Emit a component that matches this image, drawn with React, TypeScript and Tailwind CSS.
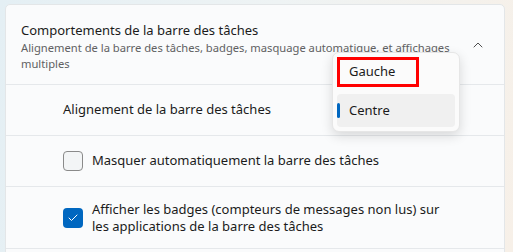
import { Check, ChevronUp } from 'lucide-react';

function Row({ children, className = '' }: { children: React.ReactNode; className?: string }) {
  return <div className={`flex items-center border-t border-[#e5e8eb] pl-[57px] pr-4 ${className}`}>{children}</div>;
}

function CheckBox({ checked }: { checked: boolean }) {
  return checked ? (
    <span className="flex h-5 w-5 shrink-0 items-center justify-center rounded-[4px] bg-[#0067c0]">
      <Check size={12} strokeWidth={2} className="text-white" />
    </span>
  ) : (
    <span className="h-5 w-5 shrink-0 rounded-[4px] border border-[#8a8a8a] bg-[#f3f5f6]" />
  );
}

export default function App() {
  return (
    <div
      className="relative h-[252px] w-[513px] overflow-hidden bg-[linear-gradient(100deg,#e4eff4_0%,#eef3f4_50%,#f7f0e8_100%)] pl-[5px] pt-1 text-[#1b1b1b]"
      style={{ fontFamily: '"Noto Sans", "Segoe UI", sans-serif' }}
    >
      <div className="w-[500px] overflow-hidden rounded-t-[5px] border border-[#e3e6e8] bg-[#fafbfc]">
        <div className="flex h-[79px] items-center pl-[15px] pr-[18px]">
          <div className="flex-1 pt-[2px]">
            <div className="text-[13px] leading-[20px]">Comportements de la barre des tâches</div>
            <div className="text-[11.2px] leading-[16px] text-[#606162]">
              Alignement de la barre des tâches, badges, masquage automatique, et affichages multiples
            </div>
          </div>
          <ChevronUp size={16} strokeWidth={1.3} className="ml-4 text-[#333]" />
        </div>
        <Row className="h-[51px]">
          <span className="text-[13px]">Alignement de la barre des tâches</span>
        </Row>
        <Row className="h-[51px] gap-[9px]">
          <CheckBox checked={false} />
          <span className="text-[13px]">Masquer automatiquement la barre des tâches</span>
        </Row>
        <Row className="h-[62px] gap-[9px]">
          <CheckBox checked />
          <span className="w-[360px] text-[13px] leading-[17px]">
            Afficher les badges (compteurs de messages non lus) sur les applications de la barre des tâches
          </span>
        </Row>
        <div className="h-2 border-t border-[#e5e8eb]" />
      </div>

      <div className="absolute left-[332px] top-[52px] flex w-[128px] flex-col gap-[7px] rounded-[7px] border border-[#e6e6e6] bg-[#fbfbfb] p-1 shadow-[0_4px_12px_rgba(0,0,0,0.14)]">
        <div className="flex h-[30px] w-[82px] items-center border-[3px] border-[#ff0000] pl-[9px] text-[13px]">Gauche</div>
        <div className="relative flex h-[33px] items-center rounded-[4px] bg-[#f0f0f0] pl-3 text-[13px]">
          <span className="absolute left-0 top-[9px] h-[15px] w-[3px] rounded-full bg-[#0067c0]" />
          Centre
        </div>
      </div>
    </div>
  );
}
